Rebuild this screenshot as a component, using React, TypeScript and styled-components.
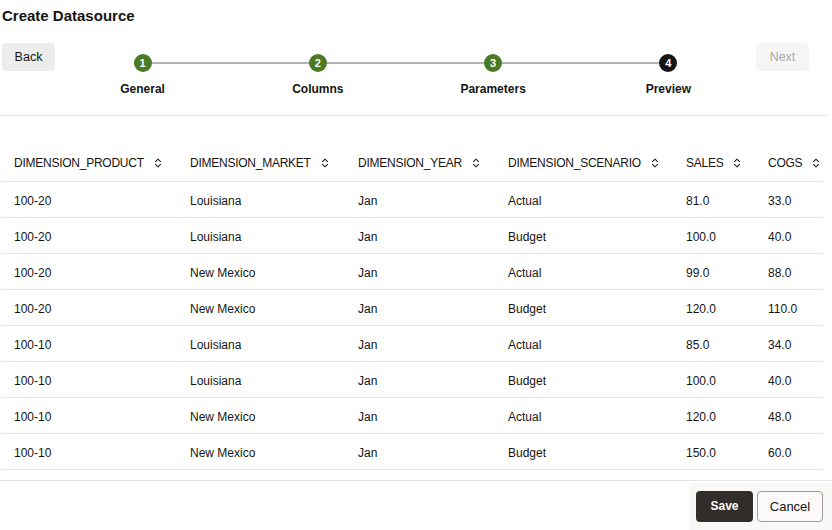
import React from "react";
import styled, { createGlobalStyle } from "styled-components";

const GlobalStyle = createGlobalStyle`
  body {
    margin: 0;
    background: #fff;
    color: #161513;
    font-family: "Liberation Sans", Arial, sans-serif;
  }
`;

type StepDef = { n: number; label: string; current?: boolean };

const steps: StepDef[] = [
  { n: 1, label: "General" },
  { n: 2, label: "Columns" },
  { n: 3, label: "Parameters" },
  { n: 4, label: "Preview", current: true },
];

const columns = [
  { key: "DIMENSION_PRODUCT", width: 176 },
  { key: "DIMENSION_MARKET", width: 168 },
  { key: "DIMENSION_YEAR", width: 150 },
  { key: "DIMENSION_SCENARIO", width: 178 },
  { key: "SALES", width: 82 },
  { key: "COGS", width: 66 },
];

const rows: string[][] = [
  ["100-20", "Louisiana", "Jan", "Actual", "81.0", "33.0"],
  ["100-20", "Louisiana", "Jan", "Budget", "100.0", "40.0"],
  ["100-20", "New Mexico", "Jan", "Actual", "99.0", "88.0"],
  ["100-20", "New Mexico", "Jan", "Budget", "120.0", "110.0"],
  ["100-10", "Louisiana", "Jan", "Actual", "85.0", "34.0"],
  ["100-10", "Louisiana", "Jan", "Budget", "100.0", "40.0"],
  ["100-10", "New Mexico", "Jan", "Actual", "120.0", "48.0"],
  ["100-10", "New Mexico", "Jan", "Budget", "150.0", "60.0"],
];

const SortIcon = () => (
  <svg width="8" height="10" viewBox="0 0 8 10" fill="none">
    <path d="M1.2 3.8 L4 1.2 L6.8 3.8" stroke="#161513" strokeWidth="1.1" />
    <path d="M1.2 6.2 L4 8.8 L6.8 6.2" stroke="#161513" strokeWidth="1.1" />
  </svg>
);

export default function App() {
  return (
    <Page>
      <GlobalStyle />
      <Title>Create Datasource</Title>
      <NavBar>
        <NavButton>Back</NavButton>
        <Stepper>
          {steps.map((s, i) => (
            <Step key={s.n} $last={i === steps.length - 1}>
              <StepDot $current={s.current}>{s.n}</StepDot>
              <StepLabel>{s.label}</StepLabel>
            </Step>
          ))}
        </Stepper>
        <NavButton disabled>Next</NavButton>
      </NavBar>

      <Table>
        <colgroup>
          {columns.map((c) => (
            <col key={c.key} style={{ width: c.width }} />
          ))}
        </colgroup>
        <thead>
          <tr>
            {columns.map((c) => (
              <HeadCell key={c.key}>
                <HeadInner>
                  {c.key}
                  <SortIcon />
                </HeadInner>
              </HeadCell>
            ))}
          </tr>
        </thead>
        <tbody>
          {rows.map((r, i) => (
            <tr key={i}>
              {r.map((v, j) => (
                <Cell key={j}>{v}</Cell>
              ))}
            </tr>
          ))}
        </tbody>
      </Table>

      <Footer>
        <Actions>
          <SaveButton>Save</SaveButton>
          <CancelButton>Cancel</CancelButton>
        </Actions>
      </Footer>
    </Page>
  );
}

const Page = styled.div`
  width: 832px;
  height: 530px;
  overflow: hidden;
`;

const Title = styled.h1`
  margin: 0;
  padding: 6px 2px 0;
  font-size: 15px;
  line-height: 20px;
  font-weight: 700;
`;

const NavBar = styled.div`
  display: flex;
  align-items: flex-start;
  margin: 17px 5px 0 0;
  padding: 0 18px 18px 2px;
  border-bottom: 1px solid #e3e3e3;
`;

const NavButton = styled.button`
  width: 53px;
  height: 28px;
  border: none;
  border-radius: 4px;
  background: ${(p) => (p.disabled ? "#f5f5f5" : "#ededed")};
  color: ${(p) => (p.disabled ? "#a8a8a8" : "#161513")};
  font-family: inherit;
  font-size: 12.5px;
  padding: 0;
`;

const Stepper = styled.div`
  flex: 1;
  display: grid;
  grid-template-columns: repeat(4, 1fr);
  padding-top: 11px;
`;

const Step = styled.div<{ $last?: boolean }>`
  position: relative;
  display: flex;
  flex-direction: column;
  align-items: center;

  &::after {
    content: "";
    display: ${(p) => (p.$last ? "none" : "block")};
    position: absolute;
    top: 8px;
    left: 50%;
    width: 100%;
    height: 2px;
    background: #b3b3b3;
  }
`;

const StepDot = styled.div<{ $current?: boolean }>`
  position: relative;
  z-index: 1;
  width: 18px;
  height: 18px;
  border-radius: 50%;
  background: ${(p) => (p.$current ? "#161513" : "#4a7a24")};
  color: #fff;
  font-size: 11px;
  font-weight: 700;
  line-height: 18px;
  text-align: center;
`;

const StepLabel = styled.div`
  margin-top: 9px;
  font-size: 12px;
  font-weight: 700;
  line-height: 16px;
`;

const Table = styled.table`
  margin: 29px 0 0 2px;
  width: 820px;
  table-layout: fixed;
  border-collapse: collapse;
  font-size: 12px;
`;

const HeadCell = styled.th`
  box-sizing: border-box;
  height: 36px;
  padding: 0 0 0 12px;
  border-bottom: 1px solid #e4e4e4;
  text-align: left;
  font-weight: 400;
  white-space: nowrap;
  letter-spacing: -0.25px;
`;

const HeadInner = styled.span`
  display: inline-flex;
  align-items: center;
  gap: 10px;
`;

const Cell = styled.td`
  box-sizing: border-box;
  height: 36px;
  padding: 3px 0 0 12px;
  border-bottom: 1px solid #e4e4e4;
  white-space: nowrap;
`;

const Footer = styled.div`
  display: flex;
  justify-content: flex-end;
  margin-top: 10px;
  padding-top: 2px;
  border-top: 1px solid #e3e3e3;
`;

const Actions = styled.div`
  display: flex;
  gap: 4px;
  padding: 8px 9px 8px 7px;
  background: #f8f8f6;
`;

const SaveButton = styled.button`
  width: 57px;
  height: 31px;
  border: none;
  border-radius: 4px;
  background: #312d2a;
  color: #fff;
  font-family: inherit;
  font-size: 12px;
  font-weight: 700;
`;

const CancelButton = styled.button`
  width: 66px;
  height: 31px;
  border: 1px solid #a19d99;
  border-radius: 4px;
  background: #fbfaf9;
  color: #161513;
  font-family: inherit;
  font-size: 13px;
`;
